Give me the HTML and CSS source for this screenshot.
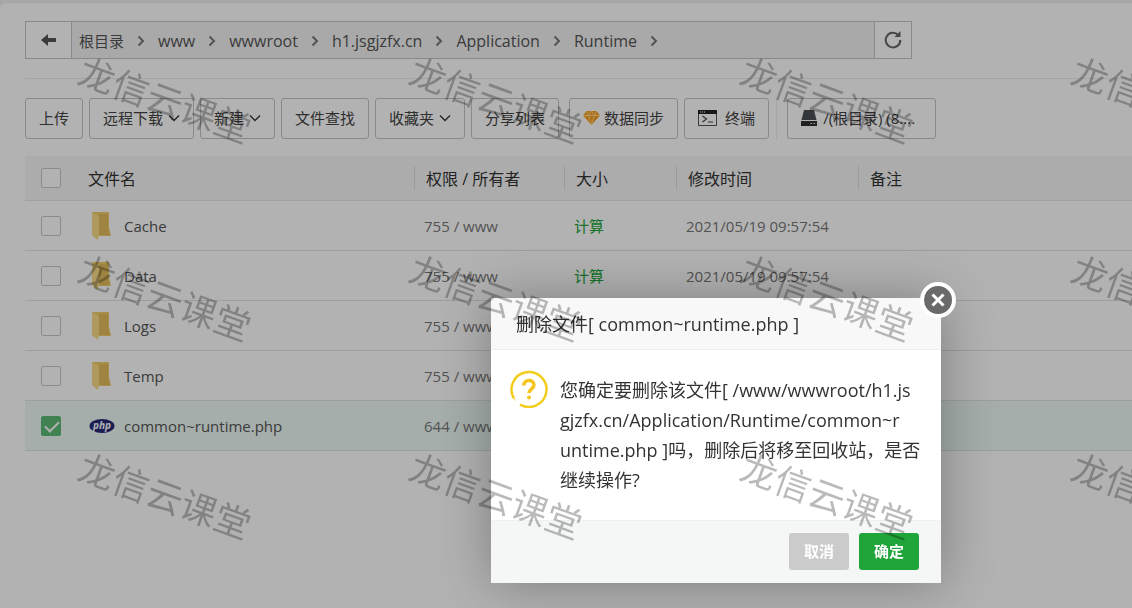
FILE: index.html
```html
<!DOCTYPE html>
<html lang="zh-CN">
<head>
  <meta charset="UTF-8">
  <meta name="viewport" content="width=device-width, initial-scale=1.0">
  <title>文件</title>
  <link rel="stylesheet" href="styles.css">
</head>
<body>
  <svg class="defs" aria-hidden="true">
    <symbol id="chevron-right" viewBox="0 0 8 12"><path d="M1.500 1.500L6 6l-4.500 4.500" fill="none" stroke="#777" stroke-width="2"/></symbol>
    <symbol id="chevron-down" viewBox="0 0 12 8"><path d="M1 1.500l5 5 5-5" fill="none" stroke="#333" stroke-width="1.300"/></symbol>
    <symbol id="folder" viewBox="0 0 20 29">
      <path d="M1 1h17v15l2 9H7L1 23z" fill="#f0cd6a"/>
      <path d="M8 3h9v13l2 8H8z" fill="#e3be5c"/>
      <path d="M1 1l7 4v20l-1.500 4L1 24z" fill="#f9dc88"/>
    </symbol>
  </svg>

  <main class="panel">
    <nav class="path-bar">
      <button class="path-btn back" aria-label="返回">
        <svg width="16" height="12" viewBox="0 0 16 12"><path d="M0 6l7-6v4h8v4H7v4z" fill="#555"/></svg>
      </button>
      <div class="path">
        <a class="root" href="#">根目录</a><svg class="sep"><use href="#chevron-right"/></svg>
        <a href="#">www</a><svg class="sep"><use href="#chevron-right"/></svg>
        <a href="#">wwwroot</a><svg class="sep"><use href="#chevron-right"/></svg>
        <a href="#">h1.jsgjzfx.cn</a><svg class="sep"><use href="#chevron-right"/></svg>
        <a href="#">Application</a><svg class="sep"><use href="#chevron-right"/></svg>
        <a href="#">Runtime</a><svg class="sep"><use href="#chevron-right"/></svg>
      </div>
      <button class="path-btn refresh" aria-label="刷新">
        <svg width="18" height="18" viewBox="0 0 18 18"><path d="M14.500 4.300A7.300 7.300 0 1 0 16.300 9" fill="none" stroke="#666" stroke-width="2"/><path d="M16.500 0v6h-6z" fill="#666"/></svg>
      </button>
    </nav>

    <div class="toolbar">
      <button class="tool">上传</button>
      <button class="tool">远程下载<svg class="caret"><use href="#chevron-down"/></svg></button>
      <button class="tool">新建<svg class="caret"><use href="#chevron-down"/></svg></button>
      <button class="tool">文件查找</button>
      <button class="tool">收藏夹<svg class="caret"><use href="#chevron-down"/></svg></button>
      <button class="tool">分享列表</button>
      <button class="tool sync">
        <svg width="17" height="14" viewBox="0 0 17 14"><path d="M3.500 0h10L17 4.500 8.500 14 0 4.500z" fill="#f9a01b"/><path d="M0 4.500h17M5.500 4.500l3 9 3-9M3.500 0l2 4.500 3-4.500 3 4.500 2-4.500" fill="none" stroke="#ffd58a" stroke-width="1"/></svg>
        数据同步
      </button>
      <button class="tool terminal">
        <svg width="19" height="16" viewBox="0 0 19 16"><path d="M.5.500h18v15H.5z" fill="none" stroke="#555"/><path d="M0 0h19v4H0z" fill="#222"/><path d="M2 2h1M4 2h1M6 2h1" stroke="#fff"/><path d="M4.500 6l4 3-4 3M10 12h5" fill="none" stroke="#444" stroke-width="1.200"/></svg>
        终端
      </button>
      <span class="divider"></span>
      <button class="tool disk">
        <svg width="16" height="16" viewBox="0 0 16 16"><path d="M3 0h10l2.500 10h-15z" fill="#4a4f55"/><path d="M0 11h16v5H0z" fill="#333"/><path d="M9.500 13.500h1.500M12.500 13.500h1.500" stroke="#ddd"/></svg>
        /(根目录) (8....
      </button>
    </div>

    <table class="files">
      <colgroup>
        <col class="col-check"><col class="col-name"><col class="col-perm"><col class="col-size"><col class="col-time"><col>
      </colgroup>
      <thead>
        <tr>
          <th><input type="checkbox" aria-label="全选"></th>
          <th>文件名</th>
          <th><span>权限 / 所有者</span></th>
          <th><span>大小</span></th>
          <th><span>修改时间</span></th>
          <th><span>备注</span></th>
        </tr>
      </thead>
      <tbody>
        <tr>
          <td><input type="checkbox" aria-label="Cache"></td>
          <td><a class="name" href="#"><svg class="folder"><use href="#folder"/></svg>Cache</a></td>
          <td>755 / www</td><td><a class="calc" href="#">计算</a></td><td>2021/05/19 09:57:54</td><td></td>
        </tr>
        <tr>
          <td><input type="checkbox" aria-label="Data"></td>
          <td><a class="name" href="#"><svg class="folder"><use href="#folder"/></svg>Data</a></td>
          <td>755 / www</td><td><a class="calc" href="#">计算</a></td><td>2021/05/19 09:57:54</td><td></td>
        </tr>
        <tr>
          <td><input type="checkbox" aria-label="Logs"></td>
          <td><a class="name" href="#"><svg class="folder"><use href="#folder"/></svg>Logs</a></td>
          <td>755 / www</td><td></td><td></td><td></td>
        </tr>
        <tr>
          <td><input type="checkbox" aria-label="Temp"></td>
          <td><a class="name" href="#"><svg class="folder"><use href="#folder"/></svg>Temp</a></td>
          <td>755 / www</td><td></td><td></td><td></td>
        </tr>
        <tr class="selected">
          <td><input type="checkbox" aria-label="common~runtime.php" checked></td>
          <td><a class="name" href="#"><svg class="php" viewBox="0 0 26 14"><ellipse cx="13" cy="7" rx="12.500" ry="7" fill="#262b78"/><text x="13" y="10" text-anchor="middle">php</text></svg>common~runtime.php</a></td>
          <td>644 / www</td><td></td><td></td><td></td>
        </tr>
      </tbody>
    </table>
  </main>

  <div class="mask"></div>

  <section class="dialog" role="dialog" aria-labelledby="dialog-title">
    <h2 id="dialog-title">删除文件[ common~runtime.php ]</h2>
    <button class="close" aria-label="关闭">
      <svg width="36" height="36" viewBox="0 0 36 36"><circle cx="18" cy="18" r="16" fill="#6a6a6a" stroke="#fff" stroke-width="4"/><path d="M12.500 12.500l11 11M23.500 12.500l-11 11" stroke="#fff" stroke-width="3"/></svg>
    </button>
    <div class="dialog-body">
      <svg class="ask" width="38" height="38" viewBox="0 0 38 38"><path d="M10 34.500A17.500 17.500 0 1 0 4 28.500" fill="none" stroke="#f3cd1e" stroke-width="2.500"/><path d="M4 28.500a17.500 17.500 0 0 0 1.500 2" fill="none" stroke="#f3cd1e" stroke-width="1"/><path d="M13.800 15.500c0-6.500 10.200-6.500 10.200-.5 0 3.800-5 3.800-5 8" fill="none" stroke="#f3c51e" stroke-width="3.500"/><circle cx="19" cy="27.500" r="2" fill="#f3c51e"/></svg>
      <p>您确定要删除该文件[ /www/wwwroot/h1.js<br>gjzfx.cn/Application/Runtime/common~r<br>untime.php ]吗，删除后将移至回收站，是否继续操作?</p>
    </div>
    <div class="dialog-footer">
      <button class="cancel">取消</button>
      <button class="confirm">确定</button>
    </div>
  </section>

  <div class="watermark" aria-hidden="true">
    <span>龙信云课堂</span><span>龙信云课堂</span><span>龙信云课堂</span><span>龙信云课堂</span>
    <span>龙信云课堂</span><span>龙信云课堂</span><span>龙信云课堂</span><span>龙信云课堂</span>
    <span>龙信云课堂</span><span>龙信云课堂</span><span>龙信云课堂</span><span>龙信云课堂</span>
  </div>
</body>
</html>
```
FILE: styles.css
```css
* {
  box-sizing: border-box;
}

body {
  margin: 0;
  padding-top: 3px;
  min-height: 100vh;
  overflow: hidden;
  background: #f0f0f0;
  color: #555;
  font-family: "Open Sans", "Noto Sans CJK SC", sans-serif;
  font-size: 15px;
}

button {
  font: inherit;
  color: inherit;
  cursor: pointer;
}

a {
  color: inherit;
  text-decoration: none;
}

.defs {
  display: none;
}

.panel {
  min-height: calc(100vh - 3px);
  padding: 18px 0 0 25px;
  background: #fff;
  border-radius: 6px 0 0 0;
}

/* path */
.path-bar {
  display: flex;
  max-width: 887px;
  height: 38px;
  border: 1px solid #c4c4c4;
}

.path-btn {
  display: flex;
  align-items: center;
  justify-content: center;
  padding: 0;
  border: 0;
  background: #fff;
}

.back {
  width: 46px;
  border-right: 1px solid #c4c4c4;
}

.refresh {
  width: 37px;
  border-left: 1px solid #c4c4c4;
}

.path {
  display: flex;
  flex: 1;
  align-items: center;
  padding: 1px 0 0 7px;
  background: #f3f3f3;
  font-size: 16px;
}

.root {
  font-size: 15px;
}

.sep {
  width: 8px;
  height: 12px;
  margin: 0 13px;
}

/* toolbar */
.toolbar {
  display: flex;
  align-items: flex-start;
  gap: 6px;
  margin-top: 19px;
  padding: 19px 0 17px;
  border-top: 1px solid #ececec;
}

.tool {
  display: flex;
  align-items: center;
  height: 41px;
  padding: 0 13px 2px;
  border: 1px solid #c4c4c4;
  border-radius: 3px;
  background: #fff;
  color: #444;
  white-space: nowrap;
}

.caret {
  width: 12px;
  height: 8px;
  margin-left: 5px;
}

.sync {
  gap: 4px;
  margin-left: 4px;
}

.terminal {
  gap: 8px;
}

.divider {
  align-self: stretch;
  width: 1px;
  margin: 0 4px 0 1px;
  background: #ececec;
}

.disk {
  gap: 6px;
  width: 149px;
}

/* file list */
.files {
  width: 100%;
  border-collapse: collapse;
  table-layout: fixed;
}

.col-check {
  width: 52px;
}

.col-name {
  width: 337px;
}

.col-perm {
  width: 150px;
}

.col-size {
  width: 112px;
}

.col-time {
  width: 182px;
}

.files th {
  height: 44px;
  padding: 0;
  background: #f7f7f7;
  border-bottom: 1px solid #e6e6e6;
  color: #333;
  font-size: 16px;
  font-weight: 400;
  text-align: left;
}

.files th:nth-child(2) {
  padding-left: 11px;
}

.files th span {
  display: block;
  padding-left: 11px;
  border-left: 1px solid #dedede;
}

.files td {
  height: 50px;
  padding: 1px 10px 0;
  border-bottom: 1px solid #e2e2e2;
  color: #777;
}

.files td:first-child {
  padding: 1px 0 0 16px;
}

.files th:first-child {
  padding-left: 16px;
}

.files input {
  display: block;
  appearance: none;
  width: 20px;
  height: 20px;
  margin: 0;
  border: 1px solid #c8c8c8;
  border-radius: 2px;
  background: #fff;
}

.files input:checked {
  border-color: #5ebb77;
  background: #5ebb77;
}

.files input:checked::before {
  content: "";
  display: block;
  width: 12px;
  height: 6px;
  margin: 4px 0 0 3px;
  border: solid #fff;
  border-width: 0 0 2px 2px;
  transform: rotate(-45deg);
}

.name {
  display: flex;
  align-items: center;
  color: #555;
}

.files .folder {
  width: 20px;
  height: 29px;
  margin: 0 13px 0 4px;
}

.php {
  width: 26px;
  height: 14px;
  margin: 0 9px 0 2px;
  overflow: visible;
}

.php text {
  fill: #fff;
  font-size: 10px;
  font-style: italic;
  font-weight: 700;
}

.calc {
  color: #20a53a;
}

.selected {
  background: #edfaf5;
}

/* dialog */
.mask {
  position: fixed;
  inset: 0;
  background: rgba(0, 0, 0, 0.3);
}

.dialog {
  position: absolute;
  top: 298px;
  left: 491px;
  width: 450px;
  background: #fff;
  color: #333;
  box-shadow: 1px 1px 50px rgba(0, 0, 0, 0.3);
}

.dialog h2 {
  margin: 0;
  padding: 1px 25px 0;
  border-bottom: 1px solid #eee;
  background: #f8f8f8;
  font-size: 18px;
  font-weight: 400;
  line-height: 50px;
}

.close {
  position: absolute;
  top: -16px;
  right: -15px;
  padding: 0;
  border: 0;
  background: none;
}

.close svg {
  display: block;
}

.dialog-body {
  display: flex;
  align-items: flex-start;
  gap: 12px;
  padding: 20px 20px 25px 19px;
}

.ask {
  flex: none;
}

.dialog-body p {
  margin: 5px 0 0;
  font-size: 18px;
  line-height: 30px;
  word-break: break-all;
}

.dialog-footer {
  display: flex;
  justify-content: flex-end;
  gap: 10px;
  padding: 12px 22px 13px;
  border-top: 1px solid #edf1f2;
  background: #f5f7f7;
}

.dialog-footer button {
  width: 60px;
  height: 37px;
  padding: 0 0 2px;
  border: 0;
  border-radius: 3px;
  color: #fff;
  font-weight: 700;
}

.cancel {
  background: #cbcbcb;
}

.confirm {
  background: #20a53a;
}

/* repeated mark over the whole page */
.watermark {
  position: fixed;
  inset: 0;
  display: grid;
  grid-template-columns: repeat(4, 331px);
  grid-auto-rows: 198px;
  align-content: start;
  overflow: hidden;
  pointer-events: none;
}

.watermark span {
  display: flex;
  align-items: center;
  justify-content: center;
  padding-bottom: 2px;
  color: rgba(0, 0, 0, 0.27);
  font-size: 36px;
  transform: rotate(20deg);
}
```
